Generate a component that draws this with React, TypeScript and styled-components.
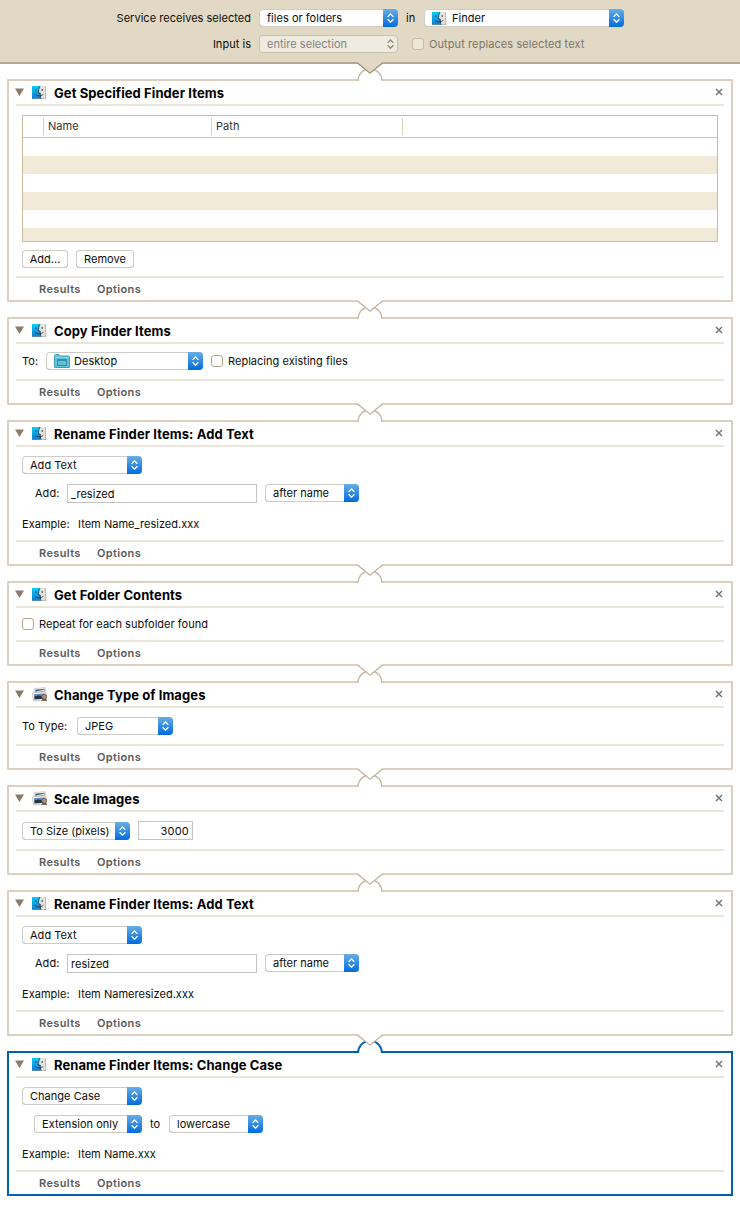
import React from "react";
import styled, { createGlobalStyle, css } from "styled-components";

const GlobalStyle = createGlobalStyle`
  *, *::before, *::after { box-sizing: border-box; }
  html, body { margin: 0; background: #fff; }
  body {
    font-family: Inter, "Liberation Sans", sans-serif;
    font-size: 11px;
    line-height: 14px;
    color: #0c0c0c;
    letter-spacing: 0.03px;
  }
`;

const Page = styled.div`
  width: 740px;
  min-height: 1207px;
  background: #fff;
`;

const ServiceBar = styled.header`
  display: flex;
  flex-direction: column;
  gap: 8px;
  height: 64px;
  padding-top: 9px;
  background: #e1d9c4;
  border-bottom: 2px solid #b5a994;
`;

const ServiceRow = styled.div`
  display: flex;
  align-items: center;
  height: 18px;
`;

const ServiceLabel = styled.span`
  width: 251px;
  margin-right: 8px;
  text-align: right;
  white-space: nowrap;
`;

const Word = styled.span<{ $left?: number; $width?: number; $dim?: boolean }>`
  flex: none;
  width: ${(p) => (p.$width ? `${p.$width}px` : "auto")};
  margin-left: ${(p) => p.$left ?? 0}px;
  white-space: nowrap;
  color: ${(p) => (p.$dim ? "#7b7568" : "inherit")};
  letter-spacing: ${(p) => (p.$dim ? 0.09 : 0.03)}px;
`;

const SelectBox = styled.div<{ $width: number; $disabled?: boolean }>`
  display: flex;
  flex: none;
  align-items: stretch;
  width: ${(p) => p.$width}px;
  height: 18px;
  border-radius: 4px;
  overflow: hidden;
  background: #fff;
  box-shadow: inset 0 0 0 1px #cfccc8, inset 0 -1px 0 #b3b0ac;
  ${(p) =>
    p.$disabled &&
    css`
      background: #efebe0;
      box-shadow: inset 0 0 0 1px #c9c0ad;
      color: #85827b;
    `}
`;

const SelectText = styled.span<{ $gap: number }>`
  display: flex;
  flex: 1;
  align-items: center;
  gap: ${(p) => p.$gap}px;
  padding-left: 8px;
  white-space: nowrap;
`;

const Stepper = styled.span<{ $disabled?: boolean }>`
  display: flex;
  align-items: center;
  justify-content: center;
  width: 15px;
  color: ${(p) => (p.$disabled ? "#8d8775" : "#fff")};
  background: ${(p) => (p.$disabled ? "none" : "linear-gradient(#69aee6, #3a8fe2 45%, #006be0)")};
`;

const CheckBox = styled.span<{ $left?: number; $dim?: boolean }>`
  flex: none;
  width: 12px;
  height: 12px;
  margin: 0 5px 0 ${(p) => p.$left ?? 0}px;
  border: 1px solid ${(p) => (p.$dim ? "#c4baa6" : "#b3a48b")};
  border-radius: 3px;
  background: ${(p) => (p.$dim ? "#ece6d9" : "#fff")};
`;

const Workflow = styled.main`
  display: flex;
  flex-direction: column;
  gap: 15px;
  padding: 15px 7px 0;
`;

const Card = styled.section<{ $height: number; $active?: boolean }>`
  position: relative;
  display: flex;
  flex-direction: column;
  height: ${(p) => p.$height}px;
  padding: 0 7px;
  border: 2px solid ${(p) => (p.$active ? "#0061b0" : "#dacfc0")};
  border-radius: ${(p) => (p.$active ? 0 : 1)}px;
`;

const Connector = styled.svg`
  position: absolute;
  top: -19px;
  left: 347px;
  width: 28px;
  height: 20px;
`;

const CardHeader = styled.div`
  display: flex;
  flex: none;
  align-items: center;
  height: 25px;
  padding-bottom: 1px;
  border-bottom: 2px solid #e9e5d8;
`;

const Disclosure = styled.svg`
  width: 9px;
  height: 8px;
  margin: 0 8px 0 -1px;
`;

const IconSlot = styled.span`
  display: flex;
  align-items: center;
  width: 14px;
  height: 15px;
  margin-top: 1px;

  svg {
    flex: none;
  }
`;

const Title = styled.h2`
  flex: 1;
  margin: 2px 0 0 8px;
  font-size: 13px;
  line-height: 16px;
  font-weight: 700;
  color: #000;
  letter-spacing: 0.09px;
`;

const Close = styled.svg`
  width: 8px;
  height: 8px;
  margin: 0 1px 0 0;
`;

const CardBody = styled.div<{ $top: number }>`
  display: flex;
  flex: 1;
  flex-direction: column;
  padding: ${(p) => p.$top}px 6px 0;
`;

const CardFooter = styled.div`
  display: flex;
  flex: none;
  align-items: center;
  height: 24px;
  padding: 0 0 1px 23px;
  border-top: 2px solid #e9e5d8;
  font-weight: 600;
  color: #5a5a5a;
`;

const FooterTab = styled.span`
  width: 58px;
  letter-spacing: 0.36px;
`;

const Row = styled.div<{ $mt?: number; $indent?: number; $height?: number; $end?: boolean }>`
  display: flex;
  flex: none;
  align-items: ${(p) => (p.$end ? "flex-end" : "flex-start")};
  height: ${(p) => p.$height ?? 18}px;
  margin-top: ${(p) => p.$mt ?? 0}px;
  padding-left: ${(p) => p.$indent ?? 0}px;
  line-height: 18px;

  ${CheckBox} {
    margin-top: 3px;
  }
`;

const Label = styled.span<{ $width: number }>`
  flex: none;
  width: ${(p) => p.$width}px;
  white-space: nowrap;
`;

const Field = styled.div<{ $width: number; $left?: number; $right?: boolean }>`
  width: ${(p) => p.$width}px;
  height: 19px;
  margin: 0 8px 0 ${(p) => p.$left ?? 0}px;
  padding: 2px 3px 0;
  border: 1px solid #c4c4c4;
  line-height: 14px;
  letter-spacing: ${(p) => (p.$right ? 0.2 : 0.03)}px;
  text-align: ${(p) => (p.$right ? "right" : "left")};
  background: #fff;
`;

const PushButton = styled.div<{ $width: number }>`
  width: ${(p) => p.$width}px;
  height: 18px;
  margin-right: 8px;
  border-radius: 4px;
  box-shadow: inset 0 0 0 1px #cfccc8, inset 0 -1px 0 #b3b0ac;
  line-height: 18px;
  text-align: center;
`;

const FileTable = styled.div`
  flex: none;
  height: 127px;
  border: 1px solid #c9bd9d;
`;

const TableHead = styled.div`
  display: flex;
  align-items: center;
  height: 22px;
  border-bottom: 1px solid #cfc4a8;
  color: #333;
`;

const HeadCell = styled.div<{ $width: number }>`
  width: ${(p) => p.$width}px;
  height: 17px;
  padding: 1px 0 0 4px;
  border-right: 1px solid #d9d0b9;
`;

const Stripes = styled.div`
  height: 103px;
  background: repeating-linear-gradient(#fff 0 18px, #f1ead9 18px 36px);
`;

const FinderIcon = () => (
  <svg width="14" height="13" viewBox="0 0 14 13">
    <defs>
      <linearGradient id="finderBlue" x1="0" y1="0" x2="0" y2="1">
        <stop offset="0" stopColor="#08cdf3" />
        <stop offset="1" stopColor="#1478d2" />
      </linearGradient>
    </defs>
    <rect width="14" height="13" fill="#e6e3da" />
    <path d="M0 0H8C6.9 2.2 6.4 4.5 6.3 7H8.2C8.2 9 8.4 11 9 13H0Z" fill="url(#finderBlue)" />
    <path d="M8 0C6.9 2.2 6.4 4.5 6.3 7H8.2C8.2 9 8.4 11 9 13" fill="none" stroke="#17344f" strokeWidth="0.8" />
    <path d="M3.8 3V5M10.2 3V5M2.8 8.2C5.2 10.4 8.9 10.4 11.3 8.2" fill="none" stroke="#17344f" strokeWidth="0.9" />
    <path d="M13.6 0V13M0 12.7H14" stroke="#9d9a8c" strokeWidth="0.6" />
  </svg>
);

const PreviewIcon = () => (
  <svg width="16" height="15" viewBox="0 0 16 15">
    <path d="M2 1.8L13.2 0.5L14.6 9L3 11Z" fill="#fafafa" stroke="#b9b9b5" strokeWidth="0.6" />
    <path d="M3.2 2.8L12.4 1.7L12.8 4.2L3.6 5.6Z" fill="#3f5f7c" />
    <path d="M4 4.5L12.4 2.4L12.7 3.7L5 5.4Z" fill="#e4e2d0" />
    <path d="M0.6 5.8L13 5L13.8 13L1.4 14Z" fill="#f7f5ef" stroke="#aaa59c" strokeWidth="0.6" />
    <path d="M2 7.2L12.2 6.4V9L2.2 9.8Z" fill="#5a87bd" />
    <path d="M2.2 9.6L6 8.6L12.4 9.6V11.8L2.4 12.6Z" fill="#263342" />
    <circle cx="12.2" cy="9.8" r="2.4" fill="#a89788" stroke="#695544" strokeWidth="0.9" />
    <path d="M9.3 13.8L10.4 12H14.2L15.4 13.9Z" fill="#775741" />
  </svg>
);

const FolderIcon = () => (
  <svg width="16" height="14" viewBox="0 0 16 14">
    <path d="M0.5 13V1.5Q0.5 0.5 1.5 0.5H5L6.5 2H14.5Q15.5 2 15.5 3V13Q15.5 13.5 15 13.5H1Q0.5 13.5 0.5 13Z" fill="#66c2d7" stroke="#3f9fb9" />
    <path d="M1 3.6H15" stroke="#8bd8e7" />
    <rect x="3.5" y="5.5" width="9" height="6" fill="#62c0d6" stroke="#2f8fab" />
    <path d="M3.5 6.5H12.5" stroke="#2f8fab" />
  </svg>
);

type SelectProps = {
  width: number;
  disabled?: boolean;
  icon?: React.ReactNode;
  gap?: number;
  children: React.ReactNode;
};

const Select = ({ width, disabled, icon, gap = 0, children }: SelectProps) => (
  <SelectBox $width={width} $disabled={disabled}>
    <SelectText $gap={gap}>
      {icon}
      {children}
    </SelectText>
    <Stepper $disabled={disabled}>
      <svg width="7" height="10" viewBox="0 0 7 10" fill="none" stroke="currentColor" strokeWidth="1.3">
        <path d="M0.6 3.9L3.5 1L6.4 3.9M0.6 6.3L3.5 9.2L6.4 6.3" />
      </svg>
    </Stepper>
  </SelectBox>
);

type ActionProps = {
  title: string;
  height: number;
  top: number;
  icon?: React.ReactNode;
  active?: boolean;
  first?: boolean;
  children: React.ReactNode;
};

const Action = ({ title, height, top, icon = <FinderIcon />, active, first, children }: ActionProps) => (
  <Card $height={height} $active={active}>
    <Connector viewBox="0 0 28 20">
      <path d="M2 20V17H26V20Z" fill="#fff" />
      <path
        d="M2 19C2.2 12.5 6.5 7 14 7S25.8 12.5 26 19"
        fill="#fff"
        stroke={active ? "#0061b0" : "#c6b9a5"}
        strokeWidth={active ? 2 : 1.3}
      />
      <path d="M2 0V1.5L14 11.5L26 1.5V0Z" fill={first ? "#e1d9c4" : "#fff"} />
      <path d="M1.5 1L14 11.2L26.5 1" fill="none" stroke={first ? "#9e9179" : "#c0b29d"} strokeWidth="1.3" />
    </Connector>
    <CardHeader>
      <Disclosure viewBox="0 0 9 8">
        <path d="M0 0.5H9L4.5 8Z" fill="#8b7b68" />
      </Disclosure>
      <IconSlot>{icon}</IconSlot>
      <Title>{title}</Title>
      <Close viewBox="0 0 8 8">
        <path d="M1 1L7 7M7 1L1 7" stroke="#777" strokeWidth="1.5" />
      </Close>
    </CardHeader>
    <CardBody $top={top}>{children}</CardBody>
    <CardFooter>
      <FooterTab>Results</FooterTab>
      <FooterTab>Options</FooterTab>
    </CardFooter>
  </Card>
);

const AddText = ({ value }: { value: string }) => (
  <Action title="Rename Finder Items: Add Text" height={146} top={9}>
    <Row>
      <Select width={120}>Add Text</Select>
    </Row>
    <Row $mt={10} $indent={13} $height={19}>
      <Label $width={32}>Add:</Label>
      <Field $width={190}>{value}</Field>
      <Select width={94}>after name</Select>
    </Row>
    <Row $mt={12}>
      <Label $width={56}>Example:</Label>
      <Word>Item Name{value}.xxx</Word>
    </Row>
  </Action>
);

export default function App() {
  return (
    <Page>
      <GlobalStyle />
      <ServiceBar>
        <ServiceRow>
          <ServiceLabel>Service receives selected</ServiceLabel>
          <Select width={139}>files or folders</Select>
          <Word $left={8} $width={18}>in</Word>
          <Select width={200} icon={<FinderIcon />} gap={6}>Finder</Select>
        </ServiceRow>
        <ServiceRow>
          <ServiceLabel>Input is</ServiceLabel>
          <Select width={139} disabled>entire selection</Select>
          <CheckBox $left={14} $dim />
          <Word $dim>Output replaces selected text</Word>
        </ServiceRow>
      </ServiceBar>
      <Workflow>
        <Action title="Get Specified Finder Items" height={223} top={9} first>
          <FileTable>
            <TableHead>
              <HeadCell $width={21} />
              <HeadCell $width={168}>Name</HeadCell>
              <HeadCell $width={191}>Path</HeadCell>
            </TableHead>
            <Stripes />
          </FileTable>
          <Row $mt={8}>
            <PushButton $width={46}>Add...</PushButton>
            <PushButton $width={58}>Remove</PushButton>
          </Row>
        </Action>
        <Action title="Copy Finder Items" height={88} top={8}>
          <Row>
            <Label $width={24}>To:</Label>
            <Select width={157} icon={<FolderIcon />} gap={4}>Desktop</Select>
            <CheckBox $left={8} />
            <Word>Replacing existing files</Word>
          </Row>
        </Action>
        <AddText value="_resized" />
        <Action title="Get Folder Contents" height={85} top={7}>
          <Row>
            <CheckBox />
            <Word>Repeat for each subfolder found</Word>
          </Row>
        </Action>
        <Action title="Change Type of Images" height={89} top={9} icon={<PreviewIcon />}>
          <Row>
            <Label $width={55}>To Type:</Label>
            <Select width={96}>JPEG</Select>
          </Row>
        </Action>
        <Action title="Scale Images" height={90} top={9} icon={<PreviewIcon />}>
          <Row $height={19} $end>
            <Select width={108}>To Size (pixels)</Select>
            <Field $width={55} $left={8} $right>3000</Field>
          </Row>
        </Action>
        <AddText value="resized" />
        <Action title="Rename Finder Items: Change Case" height={145} top={9} active>
          <Row>
            <Select width={120}>Change Case</Select>
          </Row>
          <Row $mt={10} $indent={12}>
            <Select width={108}>Extension only</Select>
            <Word $left={8} $width={19}>to</Word>
            <Select width={94}>lowercase</Select>
          </Row>
          <Row $mt={12}>
            <Label $width={56}>Example:</Label>
            <Word>Item Name.xxx</Word>
          </Row>
        </Action>
      </Workflow>
    </Page>
  );
}
